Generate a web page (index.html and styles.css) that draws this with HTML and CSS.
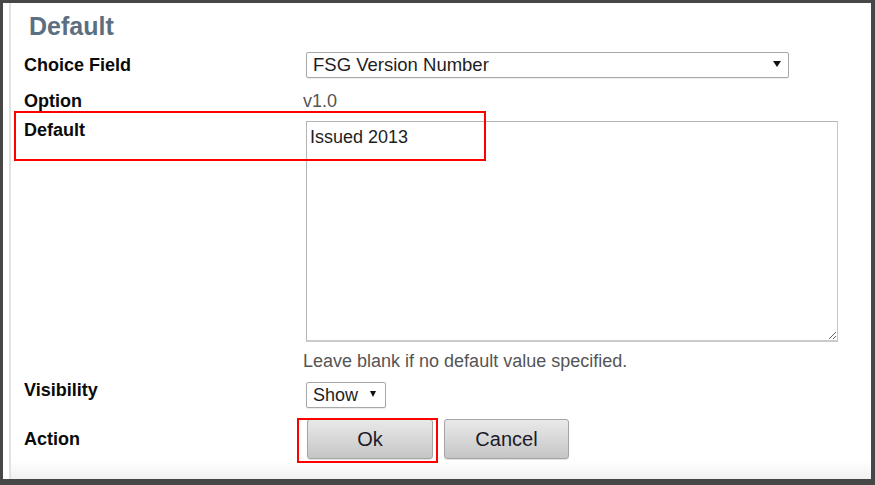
FILE: index.html
```html
<!DOCTYPE html>
<html>
<head>
<meta charset="utf-8">
<link rel="stylesheet" href="styles.css">
</head>
<body>
<div class="frame">
  <div class="inner">
    <div class="panel">
      <h1 class="title">Default</h1>
      <div class="form">
        <div class="row row-choice">
          <div class="label">Choice Field</div>
          <div class="value">
            <div class="select select-wide">
              <span class="select-text">FSG Version Number</span>
              <svg class="arrow" width="8" height="6" viewBox="0 0 8 6"><path d="M0 0H8L4 6Z" fill="#111"/></svg>
            </div>
          </div>
        </div>
        <div class="row row-option">
          <div class="label">Option</div>
          <div class="value muted">v1.0</div>
        </div>
        <div class="row row-default">
          <div class="label">Default</div>
          <div class="value">
            <textarea class="textarea">Issued 2013</textarea>
            <div class="note muted">Leave blank if no default value specified.</div>
          </div>
        </div>
        <div class="row row-visibility">
          <div class="label">Visibility</div>
          <div class="value">
            <div class="select select-small">
              <span class="select-text">Show</span>
              <svg class="arrow" width="6" height="6" viewBox="0 0 6 6"><path d="M0 0H6L3 6Z" fill="#111"/></svg>
            </div>
          </div>
        </div>
        <div class="row row-action">
          <div class="label">Action</div>
          <div class="value buttons">
            <button class="btn btn-ok">Ok</button>
            <button class="btn btn-cancel">Cancel</button>
          </div>
        </div>
      </div>
    </div>
  </div>
  <div class="mark mark-default"></div>
  <div class="mark mark-ok"></div>
</div>
</body>
</html>
```
FILE: styles.css
```css
* { box-sizing: border-box; }
html, body { margin: 0; padding: 0; background: #fff; }
body { font-family: "Liberation Sans", Arial, sans-serif; }

.frame {
  position: relative;
  width: 875px;
  height: 485px;
  border-style: solid;
  border-color: #474747;
  border-width: 3px 4px 6px 3px;
  background: #fff;
  display: flex;
}

.inner {
  margin-left: 6px;
  border-left: 2px solid #e2e2e2;
  flex: 1;
  background: linear-gradient(to bottom, #ffffff calc(100% - 18px), #f1f1f1 100%);
}

.panel {
  padding: 8px 0 0 13px;
}

.title {
  margin: 0 0 0 5px;
  font-size: 25px;
  line-height: 30px;
  font-weight: bold;
  color: #5b6f80;
}

.form {
  margin-top: 11px;
  display: flex;
  flex-direction: column;
}

.row {
  display: flex;
  align-items: flex-start;
}

.label {
  width: 279px;
  flex: none;
  font-size: 18px;
  line-height: 26px;
  font-weight: bold;
  color: #0a0a0a;
}

.value {
  font-size: 18px;
  line-height: 26px;
  color: #1e1e1e;
}

.muted { color: #555; }

.row-choice { margin-bottom: 10px; }
.row-option { margin-bottom: 3px; }

.select {
  margin-left: 3px;
  height: 26px;
  border: 1px solid #a8a8a8;
  border-radius: 2px;
  background: #fff;
  box-shadow: 0 1px 1px rgba(0,0,0,0.08);
  display: flex;
  align-items: center;
  justify-content: space-between;
  padding: 0 7px 0 6px;
  font-size: 18px;
  line-height: 24px;
  color: #1e1e1e;
}
.select-wide { width: 483px; font-size: 18.5px; }
.select-small { width: 80px; padding-right: 9px; }
.arrow { display: block; margin-top: -2px; }

.textarea {
  display: block;
  margin: 4px 0 0 3px;
  width: 532px;
  height: 221px;
  border: 1px solid #b4b4b4;
  border-right-color: #c8c8c8;
  border-bottom: 2px solid #cbcbcb;
  padding: 4px 3px;
  font-family: "Liberation Sans", Arial, sans-serif;
  font-size: 18px;
  line-height: 22px;
  color: #1e1e1e;
  resize: both;
  outline: none;
  background: #fff;
}

.note {
  margin-top: 8px;
  line-height: 22px;
}

.row-visibility { margin-top: 5px; }
.row-visibility .select { margin-top: 5px; }

.row-action { margin-top: 11px; }
.row-action .label { margin-top: 7px; }

.buttons {
  display: flex;
  gap: 11px;
  padding-left: 4px;
}

.btn {
  height: 40px;
  border: 1px solid #a4a4a4;
  border-radius: 3px;
  background: linear-gradient(to bottom, #e9e9e9 0%, #d6d6d6 55%, #c5c5c5 100%);
  font-family: "Liberation Sans", Arial, sans-serif;
  font-size: 20px;
  color: #1b1b2a;
  padding: 0;
  box-shadow: 0 1px 1px rgba(0,0,0,0.12);
}
.btn-ok { width: 126px; }
.btn-cancel { width: 125px; }

.mark {
  position: absolute;
  border: 2px solid #ff0000;
  pointer-events: none;
}
.mark-default { left: 11px; top: 108px; width: 472px; height: 50px; }
.mark-ok { left: 294px; top: 415px; width: 141px; height: 45px; }
```
